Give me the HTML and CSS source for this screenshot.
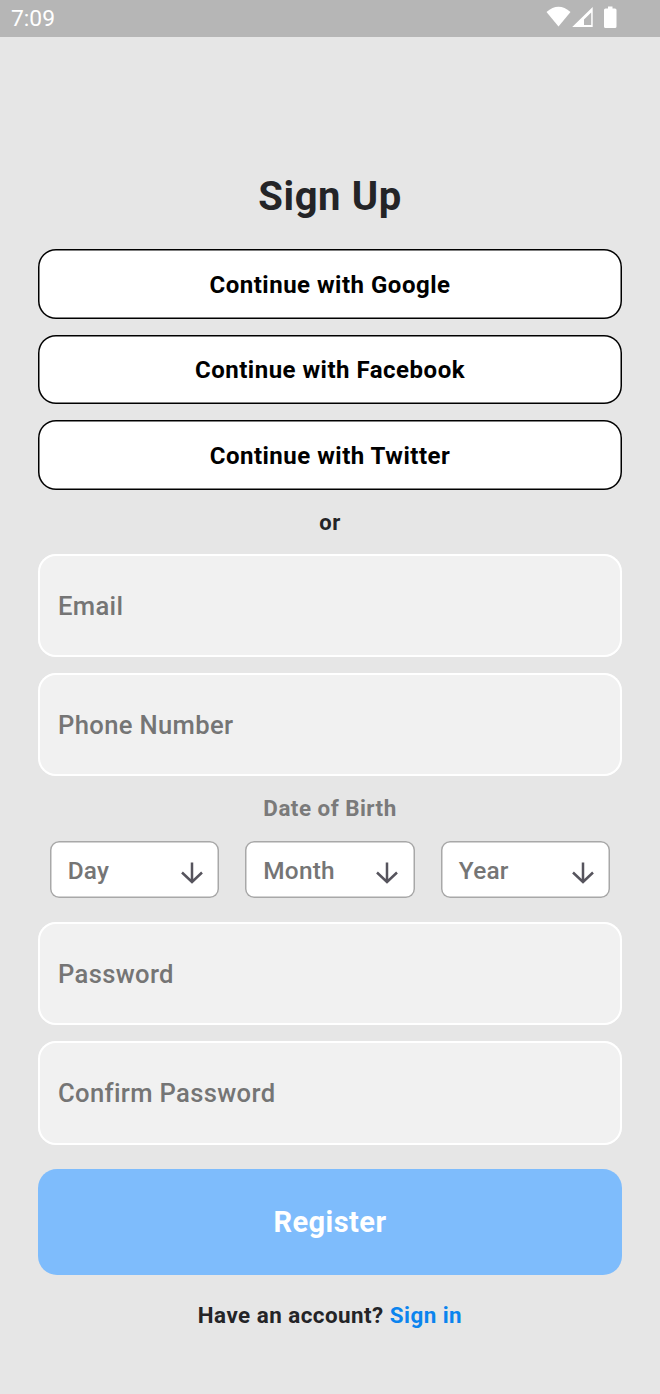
FILE: index.html
```html
<!DOCTYPE html>
<html lang="en">
<head>
<meta charset="utf-8">
<title>Sign Up</title>
<link rel="stylesheet" href="styles.css">
</head>
<body>
<header class="status">
  <span class="clock">7:09</span>
  <svg class="status-icons" width="72" height="22" viewBox="0 0 72 22" fill="#fff">
    <path d="M0.500 5Q12.500-5.500 24.500 5L12.500 19.500Z"/>
    <path fill-rule="evenodd" d="M46.700 0V20H26.200ZM45.200 5.500L38 12.500V18H45.200Z"/>
    <path d="M62 -.500H66.500V1.500H69Q70.500 1.500 70.500 3V19.500Q70.500 21 69 21H59.500Q58 21 58 19.500V3Q58 1.500 59.500 1.500H62Z"/>
  </svg>
</header>
<main class="page">
  <h1 class="title">Sign Up</h1>
  <div class="socials">
    <button class="social">Continue with Google</button>
    <button class="social">Continue with Facebook</button>
    <button class="social">Continue with Twitter</button>
  </div>
  <p class="or">or</p>
  <div class="fields">
    <div class="field">Email</div>
    <div class="field">Phone Number</div>
  </div>
  <p class="dob">Date of Birth</p>
  <div class="selects">
    <div class="select"><span>Day</span><svg class="arrow" viewBox="0 0 24 24"><path d="M12 1.500V21M2 11.500L12 21L22 11.500"/></svg></div>
    <div class="select"><span>Month</span><svg class="arrow" viewBox="0 0 24 24"><path d="M12 1.500V21M2 11.500L12 21L22 11.500"/></svg></div>
    <div class="select"><span>Year</span><svg class="arrow" viewBox="0 0 24 24"><path d="M12 1.500V21M2 11.500L12 21L22 11.500"/></svg></div>
  </div>
  <div class="fields">
    <div class="field">Password</div>
    <div class="field">Confirm Password</div>
  </div>
  <button class="register">Register</button>
  <p class="signin">Have an account? <a class="link">Sign in</a></p>
</main>
</body>
</html>
```

FILE: styles.css
```css
* { box-sizing: border-box; }
body { margin: 0; height: 1394px; background: #e6e6e6; font-family: Roboto, sans-serif; color: #242427; }
.status { display: flex; justify-content: space-between; align-items: flex-start; height: 37px; padding: 7px 41px 0 11px; background: #b6b6b6; color: #fff; }
.clock { font-size: 22.800px; line-height: 23px; }
.status-icons { display: block; margin-right: 1px; overflow: visible; }
.page { padding: 135px 38px 0; }
.title { margin: 0; font-size: 40px; line-height: 50px; font-weight: 700; letter-spacing: .6px; text-align: center; }
.socials { display: flex; flex-direction: column; gap: 16px; margin-top: 27.400px; }
.social { height: 69.500px; padding: 1px 0 0; border: 0; border-radius: 18px; background: #fff; box-shadow: inset 0 0 0 1.500px #000; color: #000; font: 700 24px Roboto, sans-serif; letter-spacing: .5px; }
.or { margin: 17px 0 15px; font-size: 22px; line-height: 32px; font-weight: 700; letter-spacing: .5px; text-align: center; }
.fields { display: flex; flex-direction: column; gap: 16px; }
.field { height: 103.300px; display: flex; align-items: center; padding-left: 20px; border-radius: 18px; background: #f1f1f1; box-shadow: inset 0 0 0 2px #fff; color: #757575; font-size: 25.600px; font-weight: 500; letter-spacing: .35px; }
.dob { margin: 17px 0 18px; font-size: 22.400px; line-height: 30px; font-weight: 700; letter-spacing: .48px; color: #7a7a7a; text-align: center; }
.selects { display: flex; gap: 26px; padding: 0 11.700px; margin-bottom: 24px; }
.select { flex: 1; height: 56.500px; display: flex; align-items: center; justify-content: space-between; padding: 2px 15.500px 0 18px; border-radius: 9px; background: #fff; box-shadow: inset 0 0 0 1.500px #a8a8a8; color: #757575; font-size: 24.400px; font-weight: 500; letter-spacing: .25px; }
.arrow { width: 24px; height: 24px; margin: 4px 0 0; fill: none; stroke: #56545d; stroke-width: 2.500; }
.register { display: block; width: 100%; height: 106.500px; margin-top: 24px; padding: 0; border: 0; border-radius: 19px; background: #7ebcfc; color: #fff; font: 700 29px Roboto, sans-serif; letter-spacing: .45px; }
.signin { margin: 24.800px 0 0; font-size: 22.400px; line-height: 30px; font-weight: 700; letter-spacing: .47px; text-align: center; }
.link { color: #0b84ee; }
```
